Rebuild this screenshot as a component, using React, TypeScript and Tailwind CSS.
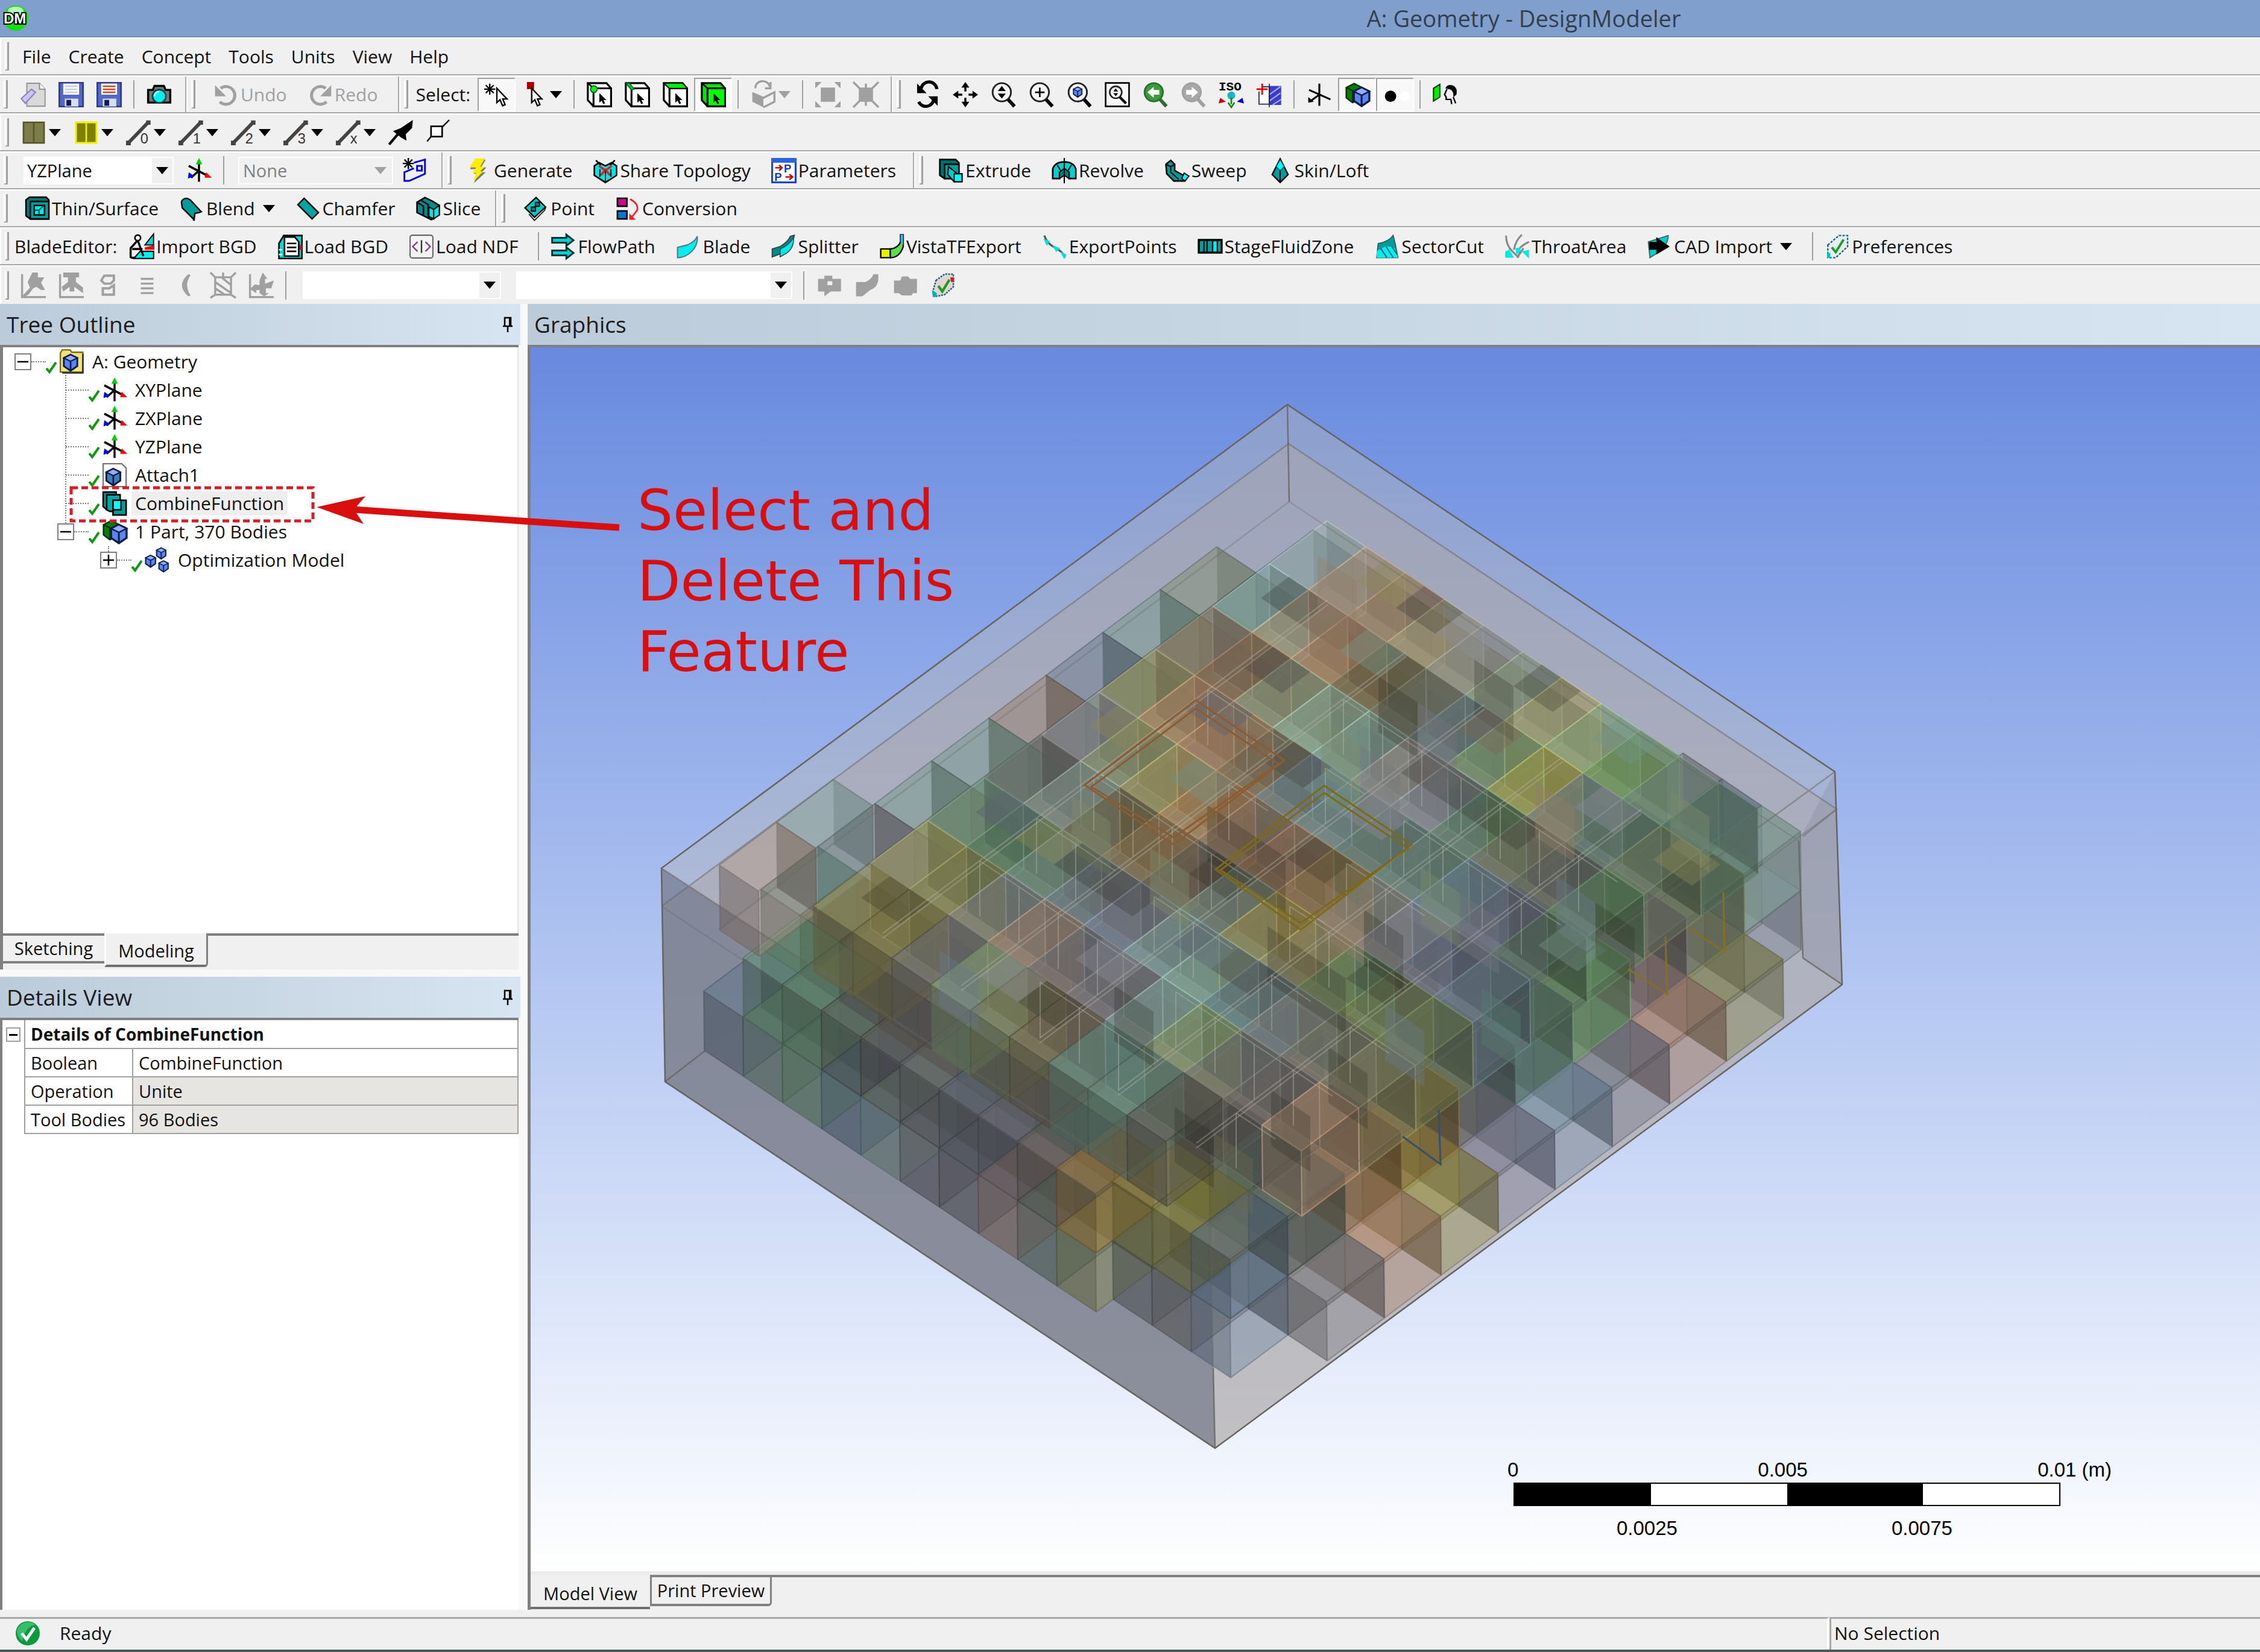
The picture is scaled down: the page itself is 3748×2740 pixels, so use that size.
import type { ReactNode } from "react";

/* ---------- icon drawings, all on a 16 x 16 grid ---------- */

const Icon = ({ children }: { children: ReactNode }) => (
  <svg viewBox="0 0 16 16" className="h-[42px] w-[42px] shrink-0 overflow-visible" aria-hidden="true">
    {children}
  </svg>
);

const k = { stroke: "#000", strokeWidth: 1 };
const g = { stroke: "#a0a0a0", strokeWidth: 1.3, fill: "none" };

const cursor = (x: number, y: number, fill = "#fff") => (
  <path
    transform={`translate(${x} ${y})`}
    d="M0 0V9L2 7.2L3.6 11L5.2 10.3L3.7 6.7H6.4Z"
    fill={fill}
    stroke="#000"
    strokeWidth={fill === "#fff" ? 0.9 : 0}
  />
);

const smallCursor = <path d="M8 7V13L9.4 11.8L10.5 14L11.6 13.4L10.6 11.4H12.5Z" fill="#000" />;

const selectCube = (body: string, front: string, extra: ReactNode) => (
  <>
    <path d="M.7 .7H12.5L15.4 4V15.4H4.3L.7 11.5Z" fill={body} {...k} strokeWidth="1.2" />
    <path d="M4.3 4H15.4V15.4H4.3Z" fill={front} {...k} strokeWidth="1.2" />
    <path d="M.7 .7L4.3 4" {...k} />
    {extra}
    {smallCursor}
  </>
);

const lens = (inner: ReactNode, fill = "#f6f6f6", stroke = "#222") => (
  <>
    <path d="M10.5 10.5L15 15.4" stroke={stroke === "#222" ? "#000" : stroke} strokeWidth="2.2" />
    <circle cx="7" cy="6.5" r="5.8" fill={fill} stroke={stroke} strokeWidth="1.1" />
    {inner}
  </>
);

const blueCube = (x: number, y: number, s: number, fill = "#5b86f0") => (
  <g transform={`translate(${x} ${y}) scale(${s})`}>
    <path d="M5 0L10 2.5V8.5L5 12L0 8.5V2.5Z" fill={fill} stroke="#0b1b4a" strokeWidth="1.3" />
    <path d="M0 2.5L5 5L10 2.5L5 0Z" fill="#8fb0ff" stroke="#0b1b4a" strokeWidth="1" />
    <path d="M5 5V12" stroke="#0b1b4a" strokeWidth="1.2" />
  </g>
);

const axes = (
  <>
    <path d="M8 3V15M1.5 5L13 11M8 8L3 12.5" {...k} strokeWidth="1.3" />
    <path d="M8 0L10 4H6Z" fill="#00d000" />
    <path d="M11.5 12.5L12.5 9L16 12.5Z" fill="#f00" />
    <path d="M1 13L1.5 9L5 11.5Z" fill="#00f" />
  </>
);

const greenAndBlue = (
  <>
    <path d="M1 3.5L6 1L10 3V11L5 13L1 10Z" fill="#0a7a0a" stroke="#003000" strokeWidth=".9" />
    <path d="M1 3.5L5 5.5V13" fill="none" stroke="#003000" strokeWidth=".8" />
    {blueCube(5.8, 3.5, 0.98)}
  </>
);

const lineTool = (label: string) => (
  <>
    <path d="M1.5 14.5L14 1.5" stroke="#444" strokeWidth="2.2" />
    <path d="M0 13H3V16H0ZM12.7 .3H15.5V3H12.7Z" fill="#444" />
    <text x="9" y="15" fontSize="9" fill="#333" fontFamily="Liberation Sans, sans-serif">
      {label}
    </text>
  </>
);

const disk = (lines: string) => (
  <>
    <rect x=".5" y=".5" width="15" height="15" fill="#5468c4" stroke="#2c3c90" />
    <rect x="3" y="1" width="10" height="7" fill="#fff" />
    <path d="M4 2.7H12M4 4.6H12M4 6.5H12" stroke={lines} strokeWidth="1" />
    <rect x="4" y="10.5" width="8.5" height="5" fill="#d6def5" />
    <rect x="5" y="11.3" width="3" height="3.7" fill="#101c55" />
  </>
);

const icons: Record<string, ReactNode> = {
  page: (
    <>
      <path d="M4 .8H12L15.5 4.5V15.3H4Z" fill="#d9d9d9" stroke="#999" strokeWidth=".8" />
      <path d="M12 .8V4.5H15.5" fill="#fff" stroke="#888" strokeWidth=".7" />
      <path d="M.5 10.5L7 4.5L9.5 6.5L3 13.5Z" fill="#c9c6f2" stroke="#8883c4" strokeWidth=".8" />
    </>
  ),
  save: disk("#c9cee2"),
  saveAll: disk("#c8502c"),
  camera: (
    <>
      <path d="M1 5H4L5 2.5H11L12 5H15V13H1Z" fill="#777" stroke="#000" strokeWidth="1.3" />
      <circle cx="8" cy="9" r="4.2" fill="#00f0f0" stroke="#044" strokeWidth="1" />
      <path d="M5 9A3 3 0 0 1 8 6" stroke="#c8ffff" fill="none" />
    </>
  ),
  undo: (
    <>
      <path d="M4.5 4A5.6 5.6 0 1 1 4 12.5" stroke="#a0a0a0" fill="none" strokeWidth="1.9" />
      <path d="M1 2V9H8Z" fill="#a0a0a0" />
    </>
  ),
  redo: (
    <>
      <path d="M11.5 4A5.6 5.6 0 1 0 12 12.5" stroke="#a0a0a0" fill="none" strokeWidth="1.9" />
      <path d="M15 2V9H8Z" fill="#a0a0a0" />
    </>
  ),
  starCursor: (
    <>
      <path d="M3.5 1V8M0 4.5H7M1 2L6 7M6 2L1 7" stroke="#000" strokeWidth=".9" />
      {cursor(8, 4)}
    </>
  ),
  redCursor: (
    <>
      <rect x="3" y="0" width="4.5" height="4.5" fill="#a80000" />
      {cursor(6, 4)}
    </>
  ),
  pickPoint: selectCube("#fff", "#fff", <circle cx="4.5" cy="4.5" r="2.1" fill="#0f0" stroke="#063" strokeWidth=".8" />),
  pickEdge: selectCube("#fff", "#fff", <path d="M.8 .8H3L6 4.5L4.3 5Z" fill="#0d0" stroke="#063" strokeWidth=".7" />),
  pickFace: selectCube("#fff", "#fff", <path d="M1.5 1H12.4L14.8 3.7H4.4Z" fill="#0e0" />),
  pickBody: selectCube("#00e600", "#00ff00", null),
  extend: (
    <>
      <path d="M1 7L8 10V16L1 12.5Z" fill="#a0a0a0" />
      <path d="M1 7L8 10L15 6.5V12.5L8 16" {...g} />
      <path d="M3 4A4.5 4 0 0 1 12 3M12.5 0V4H9" {...g} />
    </>
  ),
  boxSel: (
    <>
      <rect x="3.5" y="3.5" width="9" height="9" fill="#a0a0a0" />
      <path d="M0 0H4L0 4ZM16 0H12L16 4ZM0 16H4L0 12ZM16 16H12L16 12Z" fill="#a0a0a0" />
    </>
  ),
  boxShrink: (
    <>
      <rect x="3.5" y="3.5" width="9" height="9" fill="#a0a0a0" />
      <path d="M0 0L4 4M16 0L12 4M0 16L4 12M16 16L12 12M8 1V4M8 12V15" {...g} />
    </>
  ),
  rotate: (
    <>
      <path d="M4 5.5A5 5 0 0 1 14 4.5M12 11A5 5 0 0 1 2.5 12.5" stroke="#000" fill="none" strokeWidth="2" />
      <path d="M1.5 1V7H7.5ZM14.5 15V9H8.5Z" fill="#000" />
    </>
  ),
  pan: (
    <>
      <path d="M8 2V6M8 10V14M2 8H6M10 8H14" {...k} strokeWidth="1.3" />
      <path d="M8 0L10.5 3.5H5.5ZM8 16L10.5 12.5H5.5ZM0 8L3.5 5.5V10.5ZM16 8L12.5 5.5V10.5Z" fill="#000" />
    </>
  ),
  zoom: lens(<path d="M7 2.5L9.5 5.7H4.5ZM7 10.5L9.5 7.3H4.5Z" fill="#000" />),
  zoomBox: lens(<path d="M7 3.5V9.5M4 6.5H10" {...k} />),
  zoomFit: lens(blueCube(4.3, 3.2, 0.53)),
  zoomWin: (
    <>
      <rect x=".6" y=".6" width="14.8" height="14.8" fill="#f6f6f6" stroke="#000" />
      <circle cx="7" cy="6.5" r="3.8" fill="none" stroke="#222" />
      <path d="M9.5 9.5L13.5 13.5" stroke="#000" strokeWidth="1.6" />
      <path d="M7 4L8.5 6H5.5ZM7 9L8.5 7H5.5Z" fill="#000" />
    </>
  ),
  viewBack: lens(<path d="M3 6.5L7 3V5H10.5V8H7V10Z" fill="#fff" />, "#3b9a3b", "#2a702a"),
  viewNext: lens(<path d="M11 6.5L7 3V5H3.5V8H7V10Z" fill="#fff" />, "#a8a8a8", "#a0a0a0"),
  iso: (
    <>
      <text x="0" y="5.5" fontSize="8" fill="#000" fontFamily="Liberation Mono, monospace" fontWeight="bold">
        ISO
      </text>
      <circle cx="8" cy="8.5" r="2.5" fill="#19b5c0" />
      <path d="M8 10V14M6 13L8 16L10 13" stroke="#0a8a0a" fill="none" />
      <path d="M0 13.5L1 10L4.5 12.5Z" fill="#c00" />
      <path d="M16 13.5L15 10L11.5 12.5Z" fill="#00c" />
    </>
  ),
  section: (
    <>
      <path d="M3.5 3H8V14H1.5V6" fill="#fff" stroke="#446" strokeWidth=".8" />
      <rect x="8" y="2.5" width="7.5" height="12" fill="#3b3bd0" />
      <path d="M8 8L15 3M8 12L15 7M10 14.5L15.5 11" stroke="#aab4ff" strokeWidth=".8" />
      <path d="M8 1V16" stroke="#222" strokeWidth=".6" />
      <path d="M3.5 1V8M0 4.5H7" stroke="#d00" strokeWidth="1" />
    </>
  ),
  axisBlack: (
    <>
      <path d="M8 1V15M1.5 5L15 11M8 8L2.5 12" {...k} strokeWidth="1.2" />
      <path d="M1 13V9.5L4.5 12.5Z" fill="#000" />
    </>
  ),
  cubes: greenAndBlue,
  points: (
    <>
      <circle cx="5" cy="9" r="3.6" fill="#000" />
      <circle cx="14" cy="9" r="3" fill="#fff" />
    </>
  ),
  lookAt: (
    <>
      <path d="M.5 4L4.5 1.5V9.5L.5 12Z" fill="#0e0" stroke="#040" strokeWidth=".8" />
      <path d="M8 4Q9 1.5 12 2Q16 3 15 8L13 9.5Q13.5 5 10 4.5Z" fill="#000" />
      <path d="M9 4.5L7.5 8L8.5 9.5V11H11.5L12 14M13 9.5L14.5 13.5" stroke="#000" fill="none" strokeWidth=".9" />
    </>
  ),
  planeOlive: (
    <>
      <rect x="1.5" y="1.5" width="13" height="13" fill="#7d7d4b" stroke="#55552a" />
      <path d="M8 2V14" stroke="#55552a" />
    </>
  ),
  planeYellow: (
    <>
      <rect x="1.5" y="1.5" width="13" height="13" fill="#808000" stroke="#f2f200" strokeWidth="1.2" />
      <path d="M8 2V14" stroke="#f2f200" />
    </>
  ),
  line0: lineTool("0"),
  line1: lineTool("1"),
  line2: lineTool("2"),
  line3: lineTool("3"),
  lineX: lineTool("x"),
  pin: (
    <>
      <path d="M.5 15.5L6 9" stroke="#000" strokeWidth="1.6" />
      <path d="M3 7L8 5L15.5 0L15 5L11 9L11.5 13L8 11Z" fill="#000" />
    </>
  ),
  boxEnd: (
    <>
      <rect x="3" y="4" width="7" height="6.5" fill="#fff" {...k} />
      <path d="M10 4.5L14.5 0M3 10.5L.5 13.5" {...k} strokeWidth=".9" />
    </>
  ),
  axes,
  newPlane: (
    <>
      <path d="M3.5 0V7M0 3.5H7M1 1L6 6M6 1L1 6" stroke="#000" strokeWidth=".9" />
      <path d="M7 3L14 1V10L4 14.5H1V9L7 6.5M9 5H12V8H9Z" fill="none" stroke="#0000f0" strokeWidth="1.1" />
    </>
  ),
  bolt: (
    <>
      <path d="M6 1H12L9 6H12.5L9.5 9H12L4.5 16L7 10H4.5L6.5 7H2Z" fill="#777" />
      <path d="M5.5 .3H11.5L8.5 5.5H11.5L8.5 8.5H10.5L4 15L6 9.5H3.5L6 6H1.5Z" fill="#ffee00" />
    </>
  ),
  share: (
    <>
      <path d="M1 5L4 3L8 5L12 3L15 5V11L8 15.5L1 11Z" fill="#00e5e5" {...k} />
      <path d="M2 1.5L5 4.5M14 1.5L11 4.5" {...k} />
      <path d="M4 5L8 8L12 5M5 11L8 7.5L11 11" stroke="#e02020" fill="none" strokeWidth="1.4" />
      <path d="M8 8V15M4.5 7V12M11.5 7V12" {...k} strokeWidth=".7" />
    </>
  ),
  params: (
    <>
      <rect x=".6" y=".6" width="14.8" height="14.8" fill="#fff" stroke="#1d47c8" strokeWidth="1.2" />
      <rect x="0" y="0" width="16" height="3" fill="#2b62e0" />
      <text x="8" y="9" fontSize="7" fontWeight="bold" fill="#1338c0" fontFamily="Liberation Sans, sans-serif">P</text>
      <text x="2" y="14.5" fontSize="7" fontWeight="bold" fill="#1338c0" fontFamily="Liberation Sans, sans-serif">P</text>
      <path d="M2.5 6.2H6.5M5 4.5L6.8 6.2L5 8M9 12H13M11.5 10.3L13.5 12L11.5 13.7" stroke="#c01010" fill="none" />
    </>
  ),
  extrude: (
    <>
      <path d="M1 1H11L13 3V13H4L1 11Z" fill="#006d6d" {...k} />
      <rect x="4" y="4" width="9" height="9" fill="#00a0a0" {...k} />
      <path d="M6.5 5.5L12 10H15V15H10L6 10.5Z" fill="#00cccc" {...k} strokeWidth=".8" />
      <rect x="10" y="10" width="5" height="5" fill="#00ffff" {...k} strokeWidth=".8" />
    </>
  ),
  revolve: (
    <>
      <path d="M.7 13V7Q2 2.5 8 2.5T15.3 7V13H11V9H5V13Z" fill="#00d0d0" {...k} />
      <path d="M5 9L8 6.5L11 9V13L8 11L5 13Z" fill="#007c7c" {...k} strokeWidth=".7" />
      <path d="M3.5 4.5L6 8.5M12.5 4.5L10 8.5" {...k} strokeWidth=".8" />
      <path d="M8 0V16" {...k} strokeWidth=".8" />
    </>
  ),
  sweep: (
    <>
      <path d="M1 4L4 1.5L6.5 4V8L12 11L15 11.5L13 14.5H6L1.5 10Z" fill="#009c9c" {...k} />
      <path d="M1 4L4 5.5L6.5 4M4 5.5V9L9 13.5" fill="none" {...k} strokeWidth=".8" />
      <path d="M11 13L12.5 9.5L15.5 11.5L13 14.5Z" fill="#00ffff" {...k} strokeWidth=".7" />
    </>
  ),
  skin: (
    <>
      <path d="M8 .5L10.5 5.5L13 10.5L8 15.5L3 10.5L5.5 5.5Z" fill="#009c9c" {...k} strokeWidth=".9" />
      <path d="M8 1L10.5 5.5L8 8L5.5 5.5Z" fill="#00ffff" stroke="#055" strokeWidth=".6" />
      <path d="M8 8V15.5" {...k} strokeWidth=".8" />
    </>
  ),
  thin: (
    <>
      <path d="M.8 2.5L3 .8H13.5L15.2 2.5V14.5H3.5L.8 12.5Z" fill="#007878" {...k} />
      <rect x="3.5" y="3.5" width="11.7" height="11" fill="#009e9e" {...k} />
      <rect x="6" y="6" width="6.5" height="6" fill="#00eaea" {...k} />
      <path d="M6 9H9V12M9 9L12 6" stroke="#004a4a" strokeWidth=".8" fill="none" />
    </>
  ),
  blend: (
    <>
      <path d="M1.5 4Q2 1.5 5 1.5L7 2.5L14 10L12.5 10.5L10 11L9.5 15L2 7.5Z" fill="#009c9c" {...k} strokeWidth=".9" />
      <path d="M9 15.5L10 11" {...k} strokeWidth=".8" />
    </>
  ),
  chamfer: <path d="M5.5 1.5L14.5 10.5L10.5 14.5L1.5 5.5Z" fill="#00a6a6" {...k} strokeWidth=".9" />,
  slice: (
    <>
      <path d="M1 4L6 1L11 3.5L15 6V12L10 15L1 10.5Z" fill="#008c8c" {...k} />
      <path d="M4 3L8 5.5V13.5M1 4L5 6.5V12.5" fill="none" {...k} />
      <path d="M8.5 7L11.5 8.5V14.5L8.5 13ZM11.5 8.5L15 6V12L11.5 14.5Z" fill="#00e8e8" {...k} strokeWidth=".8" />
    </>
  ),
  point: (
    <>
      <path d="M8 1L14 7L7 13.5L1 7.5Z" fill="#00c8c8" {...k} strokeWidth=".9" />
      <rect x="7.5" y="4" width="2.6" height="2.6" fill="#008080" {...k} strokeWidth=".7" />
      <rect x="5" y="7" width="2.6" height="2.6" fill="#008080" {...k} strokeWidth=".7" />
      <path d="M14 7.5L13.5 9L7 15.5L3.5 11.5" fill="none" stroke="#222" strokeWidth=".7" />
    </>
  ),
  conversion: (
    <>
      <rect x="1.5" y="1.5" width="6" height="5" fill="#d4008c" {...k} />
      <rect x="1.5" y="9.5" width="6" height="5" fill="#0078d8" {...k} />
      <path d="M9.5 2Q15 5 14 9L10.5 13.5" stroke="#f02020" fill="none" />
      <path d="M9 11V15H13Z" fill="#f02020" />
    </>
  ),
  importBgd: (
    <>
      <path d="M15.5 0V7H10Z" fill="#00d8d8" {...k} strokeWidth=".7" />
      <path d="M10 8.5L16 7V10L10 10Z" fill="#e01010" />
      <path d="M7 11H15.5V15.5H3Z" fill="#00f0f0" {...k} strokeWidth=".8" />
      <circle cx="5.5" cy="2.5" r="1.8" fill="#fff" {...k} />
      <path d="M5.5 4L1 9V15M5.5 4L9 14M2 9.5H8.5M1 15H3.5" fill="none" {...k} strokeWidth="1.3" />
    </>
  ),
  loadBgd: (
    <>
      <path d="M1 6L4 1H15.5V15.5H1Z" fill="#00d8d8" {...k} />
      <path d="M14 7V10H15.5V7Z" fill="#e01010" />
      <path d="M4.5 2H11L13.5 5V14H4.5Z" fill="#fff" {...k} />
      <path d="M6 6H12M6 8.5H12M6 11H12" {...k} />
      <path d="M1 10H3M1 13H3" stroke="#fff" />
    </>
  ),
  loadNdf: (
    <>
      <rect x=".8" y=".8" width="14.4" height="14.4" rx="1.5" fill="#f3f3f3" stroke="#666" strokeWidth=".8" />
      <path d="M5.5 5L2.5 8L5.5 11M10.5 5L13.5 8L10.5 11" stroke="#8b3a8b" fill="none" strokeWidth=".9" />
      <path d="M8 4V12" stroke="#333" strokeWidth=".9" />
    </>
  ),
  flow: (
    <path d="M1 2.5H10V.5L14.5 4L10 7.5V5.5H1ZM1 10.5H10V8.5L14.5 12L10 15.5V13.5H1Z" fill="#00d0d0" stroke="#033" strokeWidth="1.1" />
  ),
  blade: <path d="M1 8.5L7 7Q12 5 13.5 1.5Q14 7 10 11Q6 15 1 15Z" fill="#00f0f0" stroke="#578" strokeWidth=".8" />,
  splitter: (
    <>
      <path d="M1 9.5L6 8Q11 5 12.5 1.5L15 .8Q14 6 12 9L5 13L1 14.5Z" fill="#008b8b" stroke="#344" strokeWidth=".7" />
      <path d="M6 9.5Q12 7 14.5 2Q15 8 11 11.5Q8 13.5 6 14.5Z" fill="#00e8e8" stroke="#344" strokeWidth=".6" />
    </>
  ),
  vista: (
    <>
      <path d="M1 9.5H7V15H1Z" fill="#e8f000" {...k} strokeWidth=".9" />
      <path d="M7 9.5Q12 9 13.5 5V.5H15.2V8Q13 15 7 15Z" fill="#5ade50" {...k} strokeWidth=".9" />
      <path d="M13.5 5V.5H15.2V7Z" fill="#2fb6e8" />
    </>
  ),
  exportPts: (
    <>
      <path d="M1.5 1Q3 6 8 8.5T14.5 15" stroke="#555" fill="none" strokeWidth="1.3" />
      <path d="M1 3L5 4.5L3 7.5ZM6.5 7L11.5 9L9 11.5ZM11.5 11L15.5 13L14 16Z" fill="#00e0e0" />
    </>
  ),
  stage: (
    <>
      <rect x=".8" y="3.8" width="14.4" height="8" fill="#00a0a0" {...k} strokeWidth="1.3" />
      <path d="M4 4V12M6 4V12M9.5 4V12M12.5 4V12" {...k} strokeWidth=".9" />
      <rect x="10" y="5" width="2" height="6" fill="#00f0f0" />
    </>
  ),
  sector: (
    <>
      <path d="M2.5 6Q9 5 12 .8L13.5 7L15 15H1.5Z" fill="#009a9a" stroke="#355" strokeWidth=".6" />
      <path d="M1.5 11Q8 6 13 9L15 15H1.5Z" fill="#00f0f0" />
      <path d="M4 9L8 15M7.5 8L12 15M11 8L14.5 13" stroke="#057" strokeWidth=".7" />
    </>
  ),
  throat: (
    <>
      <path d="M1 1Q1 7 5 11M11 .5Q7 4 6 10M15.5 5Q9 8 8 12" stroke="#888" fill="none" strokeWidth="1.2" />
      <path d="M.5 11L3 10L6 15H.5ZM7 9L10 8.5V12L7.5 13ZM11 11L15.5 10V15.5Z" fill="#00e8e8" />
      <path d="M3 9L9 15M12 9L8 15" stroke="#888" strokeWidth="1.2" />
    </>
  ),
  cad: (
    <>
      <path d="M1 5L13.5 1Q14 8 2 15Z" fill="#00d0d0" stroke="#366" strokeWidth=".7" />
      <path d="M1.5 5H6V2L14.5 8L6 13V10H1.5Z" fill="#000" />
    </>
  ),
  prefs: (
    <>
      <path d="M2 7L9 1H14.5V8L7 15H2Z" fill="#e6eef4" stroke="#1a6680" strokeWidth=".9" strokeDasharray="1.5 .8" />
      <path d="M4.5 8.5L7 11.5L12 3.5" stroke="#1e9c1e" fill="none" strokeWidth="1.5" />
      <path d="M1.5 12H3.5V15H1.5Z" fill="#00c0c0" />
    </>
  ),
  checkPad: (
    <>
      <path d="M3.5 5L9 1H14.5V9L9 14L4 15L1.5 12Z" fill="#e3d6d2" stroke="#1c5a88" strokeWidth=".9" strokeDasharray="1.2 .6" />
      <path d="M5 8.5L7.5 12L12 4.5" stroke="#1e9c1e" fill="none" strokeWidth="1.6" />
      <path d="M12.5 3H15V6H13Z" fill="#d02030" />
      <path d="M1 11L4 13V15.5H1.5Z" fill="#00b0b8" />
    </>
  ),
  g1: (
    <>
      <path d="M1 1V15.5H16" {...g} />
      <path d="M1.5 14.5L6 9.5L4.5 6L7.5 0H11V3L15 3L13 6.5L15.5 11H13L10 9L8 10L5 14L2 15.5Z" fill="#a0a0a0" />
    </>
  ),
  g2: (
    <>
      <path d="M1 1V15.5H16" {...g} />
      <path d="M3 0H13V3H11V6L15.5 9.5V13L10 9V12H7V9L3 12L2 9L6 6V3H3Z" fill="#a0a0a0" />
    </>
  ),
  g3: <path d="M5 2H11V5L9 7H5L3 5ZM4 10H8L11 8V14H4Z" {...g} strokeWidth="1.5" />,
  g4: <path d="M4 4H12M4 7H12M4 10H12M4 13H12" {...g} />,
  g5: <path d="M10 1Q2 8 10 15L11.5 14.5Q7 8 11.5 1.5Z" fill="#a0a0a0" />,
  g6: <path d="M3 3H13V14H3ZM0 0L3 3M16 0L13 3M0 16L3 14M16 16L13 14M3 6L13 13M3 10L9 14M7 3L13 8M8 0V3" {...g} />,
  g7: (
    <>
      <path d="M1 1V15.5H16" {...g} />
      <path d="M9 0L12 4H10.5V7L16 5L14.5 10L11 10V13H13L10 15L7 13V11H5V13L1 10.5L4 7.5L7 8V5Z" fill="#a0a0a0" />
    </>
  ),
  gs1: <path d="M1 4H5V2H10V4H15.5V12H9L5 15V12H1ZM7 5.5V8H10V5.5Z" fill="#a0a0a0" fillRule="evenodd" />,
  gs2: <path d="M1 6H7Q11 4 12 1H15Q16 9 10 11L5 15H1Z" fill="#a0a0a0" />,
  gs3: <path d="M1 5H5L6 2.5H10L11 4H15.5V13H13L12 14.5H6L4 13H1Z" fill="#a0a0a0" />,
  folder: (
    <>
      <path d="M.8 2.5L2 .5H7L8 2H15V14.5H.8Z" fill="#f2e27a" stroke="#7a6a10" strokeWidth=".9" />
      <path d="M15 3V15H2" stroke="#333" strokeWidth="1" fill="none" />
      {blueCube(3, 3.5, 0.85)}
    </>
  ),
  attach: (
    <>
      <path d="M.8 .8H12.5L15.3 3.5V15.3H.8Z" fill="#fff" stroke="#777" strokeWidth=".9" />
      {blueCube(2.8, 4, 0.88, "#3f7fb4")}
    </>
  ),
  combine: (
    <>
      <path d="M.8 .8H9V12H3L.8 10Z" fill="#009a9a" {...k} />
      <path d="M3 2.5H11.5V13H5L3 12Z" fill="#00a8a8" {...k} />
      <rect x="7" y="6" width="8.3" height="9.3" fill="#009a9a" {...k} />
      <rect x="7" y="6" width="5" height="6" fill="#00ffff" {...k} />
    </>
  ),
  parts: greenAndBlue,
  bodies: (
    <>
      {blueCube(7.5, 0.3, 0.58)}
      {blueCube(0.6, 5, 0.62)}
      {blueCube(9, 8.5, 0.58)}
    </>
  ),
};

/* ---------- toolbar parts ---------- */

const Caret = ({ dim }: { dim?: boolean }) => (
  <svg viewBox="0 0 20 12" className="h-[12px] w-[20px] shrink-0" aria-hidden="true">
    <path d="M0 0H20L10 12Z" fill={dim ? "#a0a0a0" : "#000"} />
  </svg>
);

const Sep = () => <span className="mx-[9px] h-[47px] w-[2px] shrink-0 bg-[#a0a0a0]" />;

const Grip = () => (
  <span className="h-[47px] w-[7px] shrink-0 border-r-[3px] border-b-2 border-l-2 border-r-[#a0a0a0] border-b-[#a0a0a0] border-l-white" />
);

const Tool = ({ name, label, pressed }: { name: string; label: string; pressed?: boolean }) => (
  <button
    type="button"
    aria-label={label}
    className={
      pressed
        ? "flex h-[56px] w-[63px] shrink-0 items-center justify-center border-2 border-t-[#a0a0a0] border-r-white border-b-white border-l-[#a0a0a0] bg-[#f8f8f8]"
        : "flex h-[56px] w-[63px] shrink-0 items-center justify-center"
    }
  >
    <Icon>{icons[name]}</Icon>
  </button>
);

const DropTool = ({ name, label, dim }: { name: string; label: string; dim?: boolean }) => (
  <button type="button" aria-label={label} className="flex h-[56px] w-[87px] shrink-0 items-center gap-[4px] pl-[11px]">
    <Icon>{icons[name]}</Icon>
    <Caret dim={dim} />
  </button>
);

const TextTool = ({ name, label, dim, drop }: { name: string; label: string; dim?: boolean; drop?: boolean }) => (
  <button
    type="button"
    className={
      dim
        ? "flex h-[56px] shrink-0 items-center gap-[3px] pr-[24px] pl-[10px] whitespace-nowrap text-[#a0a0a0]"
        : "flex h-[56px] shrink-0 items-center gap-[3px] pr-[24px] pl-[10px] whitespace-nowrap"
    }
  >
    <Icon>{icons[name]}</Icon>
    <span>{label}</span>
    {drop && (
      <span className="ml-[10px]">
        <Caret />
      </span>
    )}
  </button>
);

const Bar = ({ children }: { children: ReactNode }) => (
  <div className="flex h-[63px] items-stretch border-t-2 border-b-2 border-t-white border-b-[#a8a8a8]">{children}</div>
);

const Band = ({ children, end }: { children: ReactNode; end?: boolean }) => (
  <div
    className={
      end
        ? "flex shrink-0 items-center border-l-2 border-l-white pl-[6px]"
        : "flex shrink-0 items-center border-r-2 border-r-[#a8a8a8] pl-[6px]"
    }
  >
    <Grip />
    {children}
  </div>
);

const Combo = ({ label, value, width, dim }: { label: string; value: string; width: string; dim?: boolean }) => (
  <span
    className={`flex h-[46px] shrink-0 items-center ${width} ${dim ? "border-2 border-white bg-[#f0f0f0] text-[#808080]" : "bg-white"}`}
  >
    <select
      aria-label={label}
      disabled={dim}
      className="h-[42px] min-w-0 flex-1 appearance-none bg-transparent pl-[6px] text-[29px] leading-[42px] outline-none"
      defaultValue={value}
    >
      <option>{value}</option>
    </select>
    <span className="mr-[2px] flex h-[42px] w-[34px] items-center justify-center bg-[#f0f0f0]">
      <Caret dim={dim} />
    </span>
  </span>
);

/* ---------- translucent model ---------- */

type P = [number, number];
const U: P = [94.6, -71];
const V: P = [65, 43.4];

const topCells = [
  ["#b39a8a", "#84a4a0", "", "", "", "", "", "", "", ""],
  ["", "", "", "", "", "", "", "", "", ""],
  ["#a09858", "#a09a58", "#6c8f7c", "#666864", "#8c8e94", "#9a9868", "#95796a", "#8fb0aa", "#9ab0a8", ""],
  ["#8a8450", "#8a8450", "#5a8462", "#90a59c", "#8fa070", "#b8906c", "#8a6c52", "#b29c80", "#b3977a", ""],
  ["#747478", "#85858c", "#7d9488", "#6c6448", "#b0a468", "#b08a66", "#94a888", "#a98664", "#a98466", ""],
  ["#8cb07e", "#a38674", "#7b8798", "#8f7450", "#b0845a", "#7a6a54", "#90b4a2", "#66644c", "#a4a480", ""],
  ["#7c7c54", "#747478", "#7e8698", "#60605a", "#90786a", "#70889e", "#88aca0", "#6c7264", "#8f9790", ""],
  ["#7c6c56", "#7a7a7e", "#88aaa0", "#809a8c", "#9c7254", "#7a9288", "#a89c9a", "#667c84", "#8da088", ""],
  ["#6a958a", "#8caca6", "#88a898", "#a49650", "#987c48", "#648278", "#888e98", "#84a874", "#bab070", ""],
  ["#688a80", "#8aa068", "#647c8a", "#9c9468", "#909088", "#6c8c7e", "#5c8870", "#a8a450", "#88b080", ""],
  ["#5c5c56", "#747470", "#84888c", "#648e60", "#9090a0", "#6a8498", "#74766a", "#748490", "#649456", ""],
  ["", "#6a6666", "#76766a", "#6c7c48", "#606a7c", "#64687a", "#60645f", "#607a6c", "#708a78", ""],
  ["", "#bc9478", "#88886c", "#6e8050", "#667a88", "#506854", "#588458", "#707a5a", "#4c6e5c", ""],
];

const leftLow = [
  "#5f7488", "#688c74", "#62986c", "#54708a", "#7fa094", "#62626a", "#66666c", "#a07c6c", "#58786a", "#90904c", "#667070", "#6c6c6c", "#7690ac",
];
const leftMid = [
  "#506058", "#6a9a78", "#5c7c68", "#58585a", "#605c50", "#64646a", "#5a6672", "#686a74", "#60605c", "#a87a3c", "#98944a", "#88863a", "#607488",
];
const frontLow = [
  "#7690ac", "#62625f", "#ac8460", "#94863c", "#686a74", "#64847a", "#5f7868", "#94745f", "#706e60", "#7c8898",
];
const frontMid = [
  "#607488", "#54645c", "#7e5c38", "#80642c", "#585c60", "#50706c", "#6ca468", "#6a6070", "#66704a", "#84a89a",
];
const extraRow = ["", "#84848a", "#b48a70", "#9c944c", "#8484a0", "#7f98b4", "#7c7b8e", "#ae8474", "#86864c", ""];
const palette = [
  "#68788a", "#76767c", "#7e8c6c", "#947c68", "#587c70", "#68684f", "#8c8a58", "#5a6274", "#8c8c98", "#749488", "#4c4c48", "#7c6656",
];

function shade(hex: string, f: number) {
  const n = parseInt(hex.slice(1), 16);
  const c = [n >> 16, (n >> 8) & 255, n & 255].map((x) => Math.min(255, Math.round(x * f)));
  return `rgb(${c[0]},${c[1]},${c[2]})`;
}

function at(o: P, i: number, j: number, dy = 0): P {
  return [o[0] + i * U[0] + j * V[0], o[1] + i * U[1] + j * V[1] + dy];
}

const pts = (list: P[]) => list.map((p) => `${Math.round(p[0])},${Math.round(p[1])}`).join(" ");

function Cube({ o, i, j, color, lite, h }: { o: P; i: number; j: number; color: string; lite: boolean; h: number }) {
  const a = at(o, i, j);
  const b = at(o, i + 1, j);
  const c = at(o, i + 1, j + 1);
  const d = at(o, i, j + 1);
  const down = (p: P): P => [p[0] + 1, p[1] + h];
  const edge = lite ? shade(color, 1.3) : shade(color, 0.6);
  return (
    <g>
      <polygon points={pts([down(a), down(b), down(c), down(d)])} fill={shade(color, 1.08)} fillOpacity=".26" />
      <polygon points={pts([b, c, down(c), down(b)])} fill={shade(color, 0.6)} fillOpacity=".44" />
      <polygon points={pts([a, b, down(b), down(a)])} fill={shade(color, 0.95)} fillOpacity=".2" />
      <polygon points={pts([a, d, down(d), down(a)])} fill={shade(color, 0.45)} fillOpacity=".34" />
      <polygon points={pts([d, c, down(c), down(d)])} fill={shade(color, 0.85)} fillOpacity=".2" />
      <polygon points={pts([a, b, c, d])} fill={shade(color, 1.06)} fillOpacity=".36" />
      <path
        d={`M${pts([a, b, c, d])}Z M${pts([d, down(d)])} M${pts([a, down(a), down(d), down(c), c])}`}
        fill="none"
        stroke={edge}
        strokeOpacity=".42"
        strokeWidth="2"
      />
    </g>
  );
}

function Cells() {
  let seed = 41;
  const rnd = () => {
    seed = (seed * 16807) % 2147483647;
    return seed / 2147483647;
  };
  const out: ReactNode[] = [];
  for (let j = 0; j < 14; j++) {
    for (let i = 9; i >= 0; i--) {
      const r = rnd();
      if ((j === 13 && !extraRow[i]) || (j === 0 && i === 9)) continue;
      const s = j >= 10 ? 0.3 : 0;
      let color = palette[Math.floor(r * 12)];
      if (j === 13) color = extraRow[i];
      else if (i === 0) color = leftLow[j];
      else if (j === 12) color = frontLow[i];
      out.push(<Cube key={`l${i}-${j}`} o={[1167, 1645]} i={i + s} j={j} color={color} lite={false} h={98} />);
    }
  }
  for (let j = 0; j < 13; j++) {
    for (let i = 9; i >= 0; i--) {
      const r = rnd();
      const s = j >= 10 ? 0.3 : 0;
      let color = palette[Math.floor(r * 12)];
      if (i === 0) color = leftMid[j];
      else if (j === 12) color = frontMid[i];
      if (j === 0 && (i === 0 || i === 9)) continue;
      out.push(<Cube key={`m${i}-${j}`} o={[1167, 1547]} i={i + s} j={j} color={color} lite={i > 1 && i < 9 && j > 1} h={98} />);
    }
  }
  topCells.forEach((row, j) => {
    for (let i = 9; i >= 0; i--) {
      if (!row[i]) continue;
      const s = j >= 2 ? 0.27 : 0;
      out.push(<Cube key={`t${i}-${j}`} o={[1193, 1436]} i={i + s} j={j} color={row[i]} lite={j > 1 && i > 0} h={108} />);
    }
  });

  /* smaller facets that show through between neighbouring blocks */
  const facets: ReactNode[] = [];
  for (let j = 2; j < 13; j++) {
    for (let i = 0; i < 9; i++) {
      const r = rnd();
      const q = rnd();
      if (r > 0.62) continue;
      const o: P = [1193, 1436];
      const a = at(o, i + 0.77, j + 0.5);
      const tone = r < 0.3 ? "#24241c" : palette[Math.floor(q * 12)];
      const shape: P[] =
        q < 0.5
          ? [a, [a[0] + V[0], a[1] + V[1]], [a[0] + V[0], a[1] + V[1] + 92], [a[0], a[1] + 92]]
          : [a, [a[0] + U[0] / 2, a[1] + U[1] / 2], [a[0] + U[0] / 2 + V[0], a[1] + U[1] / 2 + V[1]], [a[0] + V[0], a[1] + V[1]]];
      facets.push(<polygon key={`f${i}-${j}`} points={pts(shape)} fill={tone} fillOpacity={r < 0.3 ? 0.24 : 0.4} />);
    }
  }

  const wires: ReactNode[] = [];
  for (let j = 3; j < 13; j += 2) {
    wires.push(<path key={`w${j}`} d={`M${pts([at([1193, 1476], 0.8, j), at([1193, 1476], 8.6, j)])}`} />);
    wires.push(<path key={`y${j}`} d={`M${pts([at([1193, 1484], 0.8, j), at([1193, 1484], 8.6, j)])}`} />);
  }
  for (let i = 1; i < 8; i++) {
    for (let j = 3; j < 12; j++) {
      const r = rnd();
      if (r > 0.55) continue;
      const o: P = [1193, 1476];
      wires.push(<path key={`v${i}-${j}`} d={`M${pts([at(o, i + 0.5, j), at(o, i + 0.5, j, 92)])} M${pts([at(o, i + 0.5, j), at(o, i + 0.5, j + 1)])}`} />);
    }
  }
  return (
    <g>
      {out}
      {facets}
      <g fill="none" stroke="#b8b8ac" strokeOpacity=".42" strokeWidth="2">
        {wires}
      </g>
    </g>
  );
}

const Model = () => (
  <svg viewBox="880 577 2868 2029" preserveAspectRatio="xMinYMin meet" className="absolute inset-0 h-full w-full" role="img" aria-label="Geometry model">
    <polygon points="2135,672 3043,1281 3055,1634 2015,2403 1103,1795 1097,1441" fill="#b4b4b4" fillOpacity=".42" />
    <polygon points="2137,737 3046,1343 3055,1634 2015,2403 1103,1795 1097,1504" fill="#aca6a6" fillOpacity=".5" />
    <polygon points="1097,1441 2007,2035 2015,2403 1103,1795" fill="#60687c" fillOpacity=".55" />
    <Cells />
    <polygon points="3043,1281 3055,1634 2990,1590 2983,1396" fill="#8088a0" fillOpacity=".3" />
    <g fill="none" stroke="#66645c" strokeWidth="2.5">
      <path d="M2135 672L3043 1281L3055 1634L2015 2403L1103 1795L1097 1441Z" />
      <path d="M2012 2270L2015 2403M1103 1795L1169 1744M2135 672L2138 833" strokeOpacity=".8" />
      <path d="M1097 1504L2137 737L3046 1343L2990 1388M1097 1441L2007 2035L3043 1281" strokeOpacity=".5" />
      <path d="M2007 2035L2012 2270M1097 1504L2008 2108L3046 1343M1192 1543L2138 833L2983 1396" strokeOpacity=".3" />
      <path d="M2990 1590L3055 1634M2983 1396L2990 1590" strokeOpacity=".8" />
    </g>
    <g fill="none" strokeWidth="3">
      <path d="M2196 1304L2341 1402L2157 1543L2016 1443ZM2196 1316L2335 1408L2157 1532L2024 1444Z" stroke="#7d6a18" />
      <path d="M1983 1162L2130 1262L1946 1402L1799 1303ZM1983 1176L2120 1268L1946 1390L1810 1306Z" stroke="#8b5c34" />
      <path d="M2858 1480L2860 1580L2800 1540M2762 1554L2765 1650L2700 1608" stroke="#847020" />
      <path d="M2386 1842L2389 1932L2326 1886" stroke="#34506c" />
    </g>
  </svg>
);

/* ---------- panels ---------- */

const Pin = () => (
  <button type="button" aria-label="Pin panel" className="mr-[12px] flex items-center">
    <svg viewBox="0 0 18 26" className="h-[26px] w-[18px]" aria-hidden="true">
      <path d="M4 15V2H14V15M1 16H17M9 16V26" fill="none" stroke="#000" strokeWidth="2.5" />
      <path d="M11 2H14V15H11Z" fill="#000" />
    </svg>
  </button>
);

const PanelHead = ({ title, pin }: { title: string; pin?: boolean }) => (
  <div className="flex h-[68px] shrink-0 items-center justify-between bg-gradient-to-r from-[#bccbd9] to-[#d7e5f2] pl-[11px]">
    <h2 className="text-[37px] leading-[50px] text-[#1c1c1c]">{title}</h2>
    {pin && <Pin />}
  </div>
);

const Expander = ({ plus }: { plus?: boolean }) => (
  <button type="button" aria-label={plus ? "Expand" : "Collapse"} className="z-10 flex h-[28px] w-[28px] shrink-0 items-center justify-center border-2 border-[#808080] bg-white">
    <svg viewBox="0 0 18 18" className="h-[18px] w-[18px]" aria-hidden="true">
      <path d={plus ? "M0 9H18M9 0V18" : "M0 9H18"} stroke="#000" strokeWidth="2.5" />
    </svg>
  </button>
);

const Check = () => (
  <svg viewBox="0 0 18 20" className="mt-[20px] h-[20px] w-[18px] shrink-0" aria-hidden="true">
    <path d="M1 11L6 17L17 1" fill="none" stroke="#0d9a0d" strokeWidth="4" />
  </svg>
);

const Dots = ({ width }: { width: string }) => <span className={`shrink-0 border-t-2 border-dotted border-[#808080] ${width}`} />;

const TreeRow = ({ indent, box, icon, label, selected }: { indent: string; box?: "plus" | "minus"; icon: string; label: string; selected?: boolean }) => (
  <li className={`flex h-[47px] items-center ${indent}`}>
    {box ? (
      <>
        <Expander plus={box === "plus"} />
        <Dots width="w-[24px]" />
      </>
    ) : (
      <Dots width="w-[38px]" />
    )}
    <Check />
    <span className="ml-[4px]">
      <Icon>{icons[icon]}</Icon>
    </span>
    <span className={selected ? "ml-[7px] bg-[#eeeeee] px-[6px]" : "ml-[13px]"}>{label}</span>
  </li>
);

const planes = ["XYPlane", "ZXPlane", "YZPlane"];
const menus = ["File", "Create", "Concept", "Tools", "Units", "View", "Help"];
const details = [
  ["Boolean", "CombineFunction"],
  ["Operation", "Unite"],
  ["Tool Bodies", "96 Bodies"],
];

export default function App() {
  return (
    <div className="flex h-screen flex-col overflow-hidden bg-[#f0f0f0] font-['Open_Sans',sans-serif] text-[30px] leading-[40px] text-[#111]">
      <header className="relative flex h-[62px] shrink-0 items-center justify-center border-b-2 border-[#6f8fb8] bg-[#809fcc]">
        <svg viewBox="0 0 44 44" className="absolute left-[4px] h-[44px] w-[44px] overflow-visible" aria-hidden="true">
          <circle cx="22" cy="22" r="21" fill="#12e012" />
          <ellipse cx="22" cy="10" rx="13" ry="7" fill="#b6ffb6" />
          <text x="2" y="31" fontSize="24" fontWeight="bold" fill="#fff" stroke="#000" strokeWidth="4" paintOrder="stroke" fontFamily="Liberation Sans, sans-serif">
            DM
          </text>
        </svg>
        <h1 className="pl-[1306px] text-[38px] leading-[50px] text-[#333f4d]">A: Geometry - DesignModeler</h1>
      </header>

      <div className="shrink-0">
        <Bar>
          <Band end>
            <nav className="flex gap-[29px] pl-[22px]">
              {menus.map((m) => (
                <button type="button" key={m}>
                  {m}
                </button>
              ))}
            </nav>
          </Band>
        </Bar>

        <Bar>
          <Band>
            <div className="flex items-center pl-[10px]">
              <Tool name="page" label="New" />
              <Tool name="save" label="Save" />
              <Tool name="saveAll" label="Save all" />
              <Sep />
              <Tool name="camera" label="Image capture" />
            </div>
            <span className="w-[12px]" />
          </Band>
          <Band end>
            <div className="flex items-center pl-[20px]">
              <TextTool name="undo" label="Undo" dim />
              <TextTool name="redo" label="Redo" dim />
            </div>
            <span className="h-full w-[12px] border-r-2 border-[#a8a8a8]" />
          </Band>
          <Band end>
            <span className="pr-[12px] pl-[12px]">Select:</span>
            <Tool name="starCursor" label="New selection" pressed />
            <DropTool name="redCursor" label="Select mode" />
            <Sep />
            <Tool name="pickPoint" label="Points" />
            <Tool name="pickEdge" label="Edges" />
            <Tool name="pickFace" label="Faces" />
            <Tool name="pickBody" label="Bodies" pressed />
            <Sep />
            <DropTool name="extend" label="Extend selection" dim />
            <Sep />
            <Tool name="boxSel" label="Expand" />
            <Tool name="boxShrink" label="Shrink" />
            <span className="h-full w-[12px] border-r-2 border-[#a8a8a8]" />
          </Band>
          <Band end>
            <div className="flex items-center pl-[12px]">
              <Tool name="rotate" label="Rotate" />
              <Tool name="pan" label="Pan" />
              <Tool name="zoom" label="Zoom" />
              <Tool name="zoomBox" label="Box zoom" />
              <Tool name="zoomFit" label="Zoom to fit" />
              <Tool name="zoomWin" label="Magnifier" />
              <Tool name="viewBack" label="Previous view" />
              <Tool name="viewNext" label="Next view" />
              <Tool name="iso" label="Isometric view" />
              <Tool name="section" label="New section plane" />
              <Sep />
              <Tool name="axisBlack" label="Display plane" />
              <Tool name="cubes" label="Display model" pressed />
              <Tool name="points" label="Display points" pressed />
              <Sep />
              <Tool name="lookAt" label="Look at" />
            </div>
          </Band>
        </Bar>

        <Bar>
          <Band end>
            <div className="flex items-center pl-[9px]">
              <DropTool name="planeOlive" label="Face color" />
              <DropTool name="planeYellow" label="Edge color" />
              <DropTool name="line0" label="Edge joint 0" />
              <DropTool name="line1" label="Edge joint 1" />
              <DropTool name="line2" label="Edge joint 2" />
              <DropTool name="line3" label="Edge joint 3" />
              <DropTool name="lineX" label="Edge joint x" />
              <Tool name="pin" label="Edge direction" />
              <Tool name="boxEnd" label="Display vertices" />
            </div>
          </Band>
        </Bar>

        <Bar>
          <Band>
            <div className="flex items-center pl-[26px]">
              <Combo label="Active plane" value="YZPlane" width="w-[249px]" />
              <span className="w-[10px]" />
              <Tool name="axes" label="New plane" />
              <Sep />
              <span className="w-[14px]" />
              <Combo label="Active sketch" value="None" width="w-[257px]" dim />
              <span className="w-[5px]" />
              <Tool name="newPlane" label="New sketch" />
            </div>
            <span className="w-[12px]" />
          </Band>
          <Band end>
            <div className="flex items-center pl-[15px]">
              <TextTool name="bolt" label="Generate" />
              <TextTool name="share" label="Share Topology" />
              <TextTool name="params" label="Parameters" />
            </div>
            <span className="h-full w-[6px] border-r-2 border-[#a8a8a8]" />
          </Band>
          <Band end>
            <div className="flex items-center pl-[15px]">
              <TextTool name="extrude" label="Extrude" />
              <TextTool name="revolve" label="Revolve" />
              <TextTool name="sweep" label="Sweep" />
              <TextTool name="skin" label="Skin/Loft" />
            </div>
          </Band>
        </Bar>

        <Bar>
          <Band>
            <div className="flex items-center pl-[18px]">
              <TextTool name="thin" label="Thin/Surface" />
              <TextTool name="blend" label="Blend" drop />
              <TextTool name="chamfer" label="Chamfer" />
              <TextTool name="slice" label="Slice" />
            </div>
          </Band>
          <Band end>
            <div className="flex items-center pl-[20px]">
              <TextTool name="point" label="Point" />
              <TextTool name="conversion" label="Conversion" />
            </div>
          </Band>
        </Bar>

        <Bar>
          <Band end>
            <span className="pr-[10px] pl-[9px]">BladeEditor:</span>
            <TextTool name="importBgd" label="Import BGD" />
            <TextTool name="loadBgd" label="Load BGD" />
            <TextTool name="loadNdf" label="Load NDF" />
            <Sep />
            <TextTool name="flow" label="FlowPath" />
            <TextTool name="blade" label="Blade" />
            <TextTool name="splitter" label="Splitter" />
            <TextTool name="vista" label="VistaTFExport" />
            <TextTool name="exportPts" label="ExportPoints" />
            <TextTool name="stage" label="StageFluidZone" />
            <TextTool name="sector" label="SectorCut" />
            <TextTool name="throat" label="ThroatArea" />
            <TextTool name="cad" label="CAD Import" drop />
            <Sep />
            <TextTool name="prefs" label="Preferences" />
          </Band>
        </Bar>

        <div className="flex h-[64px] items-stretch border-t-2 border-white">
          <Band end>
            <div className="flex items-center pl-[8px]">
              <Tool name="g1" label="Stage" />
              <Tool name="g2" label="Section" />
              <Tool name="g3" label="Contour" />
              <Tool name="g4" label="Layers" />
              <Tool name="g5" label="Camber" />
              <Tool name="g6" label="Meridional" />
              <Tool name="g7" label="Angle" />
              <Sep />
              <span className="w-[18px]" />
              <Combo label="Blade row" value="" width="w-[329px]" />
              <span className="w-[25px]" />
              <Combo label="Layer" value="" width="w-[458px]" />
              <span className="w-[9px]" />
              <Sep />
              <Tool name="gs1" label="Hub" />
              <Tool name="gs2" label="Blade view" />
              <Tool name="gs3" label="Shroud" />
              <Tool name="checkPad" label="Blade preferences" />
            </div>
          </Band>
        </div>
      </div>

      <main className="relative flex min-h-0 flex-1 bg-[#f8f8f8]">
        <aside className="flex w-[863px] shrink-0 flex-col">
          <section className="flex h-[1104px] shrink-0 flex-col">
            <PanelHead title="Tree Outline" pin />
            <div className="mr-[3px] flex flex-1 flex-col border-t-4 border-l-[5px] border-[#808080] bg-[#f0f0f0]">
              <div className="relative flex-1 border-r-2 border-[#e4e4e4] bg-white">
                <span className="absolute top-[46px] left-[103px] h-[250px] border-l-2 border-dotted border-[#808080]" />
                <span className="absolute top-[330px] left-[174px] h-[16px] border-l-2 border-dotted border-[#808080]" />
                <ul>
                  <TreeRow indent="pl-[19px]" box="minus" icon="folder" label="A: Geometry" />
                  {planes.map((p) => (
                    <TreeRow key={p} indent="pl-[104px]" icon="axes" label={p} />
                  ))}
                  <TreeRow indent="pl-[104px]" icon="attach" label="Attach1" />
                  <TreeRow indent="pl-[104px]" icon="combine" label="CombineFunction" selected />
                  <TreeRow indent="pl-[90px]" box="minus" icon="parts" label="1 Part, 370 Bodies" />
                  <TreeRow indent="pl-[161px]" box="plus" icon="bodies" label="Optimization Model" />
                </ul>
              </div>
              <div className="flex h-[60px] shrink-0 items-start" role="tablist">
                <button type="button" role="tab" className="h-[50px] w-[168px] border-t-4 border-b-4 border-[#808080] bg-[#f0f0f0] text-center text-[29px]">
                  Sketching
                </button>
                <button type="button" role="tab" aria-selected="true" className="h-[56px] w-[172px] rounded-br-[6px] border-r-[3px] border-b-4 border-l-[3px] border-r-[#808080] border-b-[#707070] border-l-white bg-[#f0f0f0] pt-[5px] text-center text-[29px]">
                  Modeling
                </button>
                <span className="flex-1 border-t-4 border-[#808080]" />
              </div>
            </div>
          </section>

          <div className="h-[12px] shrink-0" />

          <section className="flex min-h-0 flex-1 flex-col">
            <PanelHead title="Details View" pin />
            <div className="mr-[3px] flex flex-1 items-start border-t-4 border-l-4 border-[#808080] bg-white">
              <button type="button" aria-label="Collapse group" className="mx-[6px] mt-[12px] flex h-[24px] w-[24px] shrink-0 items-center justify-center border-2 border-[#a0a0a0]">
                <span className="h-[3px] w-[14px] bg-black" />
              </button>
              <table className="w-full border-collapse text-left text-[29px]">
                <thead>
                  <tr className="h-[47px]">
                    <th colSpan={2} className="border-2 border-t-0 border-[#a0a0a0] pl-[9px] text-[28px] font-bold">
                      Details of CombineFunction
                    </th>
                  </tr>
                </thead>
                <tbody>
                  {details.map(([name, value], n) => (
                    <tr key={name} className="h-[47px]">
                      <th scope="row" className="w-[179px] border-2 border-[#a0a0a0] pl-[9px] font-normal whitespace-nowrap">
                        {name}
                      </th>
                      <td className={n ? "border-2 border-[#a0a0a0] bg-[#e6e5e1] pl-[9px]" : "border-2 border-[#a0a0a0] pl-[9px]"}>{value}</td>
                    </tr>
                  ))}
                </tbody>
              </table>
            </div>
          </section>
        </aside>

        <section className="ml-[12px] flex min-w-0 flex-1 flex-col">
          <PanelHead title="Graphics" />
          <div className="flex min-h-0 flex-1 flex-col border-t-4 border-l-[5px] border-[#808080] bg-[#f0f0f0]">
            <div className="relative min-h-0 flex-1 overflow-hidden bg-gradient-to-b from-[#6889de] to-white">
              <Model />
              <p className="absolute top-[213px] left-[177px] w-[560px] font-['DejaVu_Sans',sans-serif] text-[93px] leading-[117px] text-[#d90f0f]">
                Select and Delete This Feature
              </p>
              <div className="absolute right-[246px] bottom-[52px] w-[1002px] font-['Liberation_Sans',sans-serif] text-[33px] leading-[38px] text-black">
                <div className="flex">
                  <span className="w-[420px]">0</span>
                  <span className="w-[469px]">0.005</span>
                  <span className="whitespace-nowrap">0.01 (m)</span>
                </div>
                <div className="mt-[2px] ml-[10px] flex h-[39px] w-[907px] border-2 border-black">
                  <span className="flex-1 bg-black" />
                  <span className="flex-1 bg-white" />
                  <span className="flex-1 bg-black" />
                  <span className="flex-1 bg-white" />
                </div>
                <div className="mt-[18px] flex pl-[181px]">
                  <span className="w-[456px]">0.0025</span>
                  <span>0.0075</span>
                </div>
              </div>
            </div>
            <div className="flex h-[64px] shrink-0 items-start border-t-[6px] border-[#ececec]" role="tablist">
              <button type="button" role="tab" aria-selected="true" className="h-[57px] w-[198px] border-b-4 border-[#707070] pt-[9px] text-center text-[29px]">
                Model View
              </button>
              <button type="button" role="tab" className="h-[52px] w-[202px] rounded-br-[6px] border-[3px] border-t-4 border-b-4 border-[#808080] text-center text-[29px]">
                Print Preview
              </button>
              <span className="flex-1 border-t-4 border-[#808080]" />
            </div>
          </div>
        </section>

        <svg viewBox="0 0 1040 400" className="pointer-events-none absolute top-0 left-0 h-[400px] w-[1040px]" aria-hidden="true">
          <rect x="118" y="305" width="401" height="55" fill="none" stroke="#dc1c24" strokeWidth="5" strokeDasharray="11 6" />
          <path d="M585 341L1027 371" stroke="#d90f0f" strokeWidth="11" />
          <path d="M525 337L606 319L587 341L603 365Z" fill="#d90f0f" />
        </svg>
      </main>

      <footer className="flex h-[70px] shrink-0 items-stretch border-b-4 border-[#4c5a57] bg-[#f0f0f0] pt-[12px]">
        <div className="flex w-[3034px] items-center border-t-[3px] border-r-4 border-t-[#a8a8a8] border-r-white pb-[4px] pl-[25px]">
          <svg viewBox="0 0 42 42" className="h-[42px] w-[42px]" aria-hidden="true">
            <circle cx="21" cy="21" r="20" fill="#0c9a3c" />
            <path d="M3 18A19 19 0 0 1 34 7Q18 8 12 34Q4 28 3 18Z" fill="#55d58a" fillOpacity=".6" />
            <path d="M11 21L19 31L32 12" fill="none" stroke="#fff" strokeWidth="5" />
          </svg>
          <span className="pl-[32px]">Ready</span>
        </div>
        <div className="flex flex-1 items-center border-t-[3px] border-l-[3px] border-[#a8a8a8] pb-[4px] pl-[5px]">No Selection</div>
      </footer>
    </div>
  );
}
